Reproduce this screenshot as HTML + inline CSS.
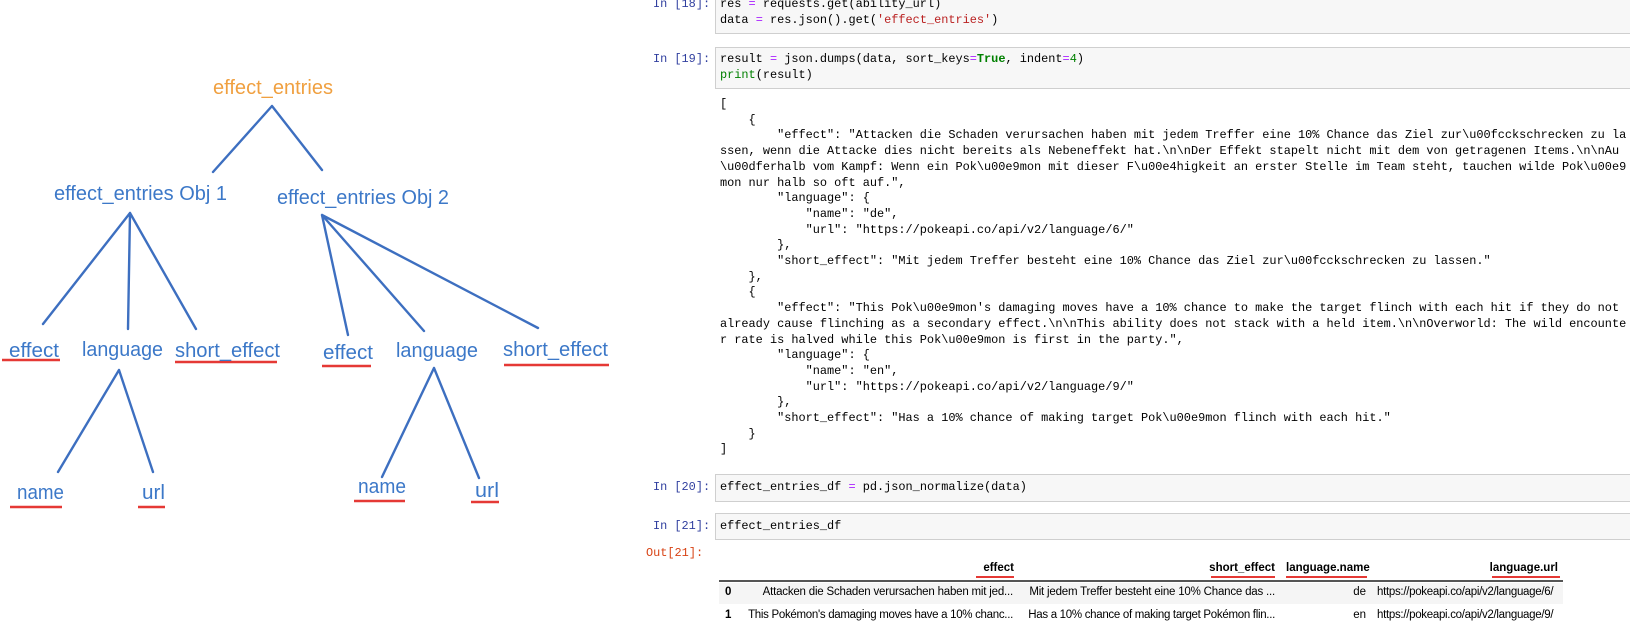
<!DOCTYPE html>
<html><head><meta charset="utf-8"><style>
*{margin:0;padding:0;box-sizing:border-box}
body{width:1630px;height:628px;overflow:hidden;background:#fff;position:relative;font-family:"Liberation Sans",sans-serif}
.p{position:absolute;font-family:"Liberation Mono",monospace;font-size:11.9px;white-space:pre;line-height:15.7px}
.in{color:#303f9f}.out{color:#d84315}
.cell{position:absolute;left:715px;right:0;background:#f7f7f7;border:1px solid #cfcfcf;border-right:none}
.k{color:#008000;font-weight:bold}.o{color:#aa22ff}.s{color:#ba2121}.b{color:#008000}
.t{position:absolute;font-size:11.5px;color:#000;white-space:nowrap}
.r{text-align:right}
.h{font-weight:bold}
.u{position:absolute;height:2px;background:#e53935}
</style></head><body>
<svg width="620" height="628" style="position:absolute;left:0;top:0" font-family="Liberation Sans, DejaVu Sans, sans-serif">
<g stroke="#3d6fc0" stroke-width="2.4" fill="none" stroke-linecap="round">
<path d="M272 106L213 172M272 106L322 170"/>
<path d="M130 213L43 324M130 213L128 329M130 213L196 329"/>
<path d="M322 215L348 335M322 215L424 331M322 215L538 328"/>
<path d="M119 370L58 472M119 370L153 472"/>
<path d="M434 368L382 477M434 368L479 478"/>
</g>
<g stroke="#e53935" stroke-width="2.4">
<path d="M2 360H60M175 362H277M322 366H371M504 365H609M10 507H62M138 507H165M354 501H405M471 502H499"/>
</g>
<g font-size="20" fill="#3c78c8">
<text x="213" y="94" fill="#f0a040" textLength="120" lengthAdjust="spacingAndGlyphs">effect_entries</text>
<text x="54" y="200" textLength="173" lengthAdjust="spacingAndGlyphs">effect_entries Obj 1</text>
<text x="277" y="204" textLength="172" lengthAdjust="spacingAndGlyphs">effect_entries Obj 2</text>
<text x="9" y="357" textLength="50" lengthAdjust="spacingAndGlyphs">effect</text>
<text x="82" y="356" textLength="81" lengthAdjust="spacingAndGlyphs">language</text>
<text x="175" y="357" textLength="105" lengthAdjust="spacingAndGlyphs">short_effect</text>
<text x="323" y="359" textLength="50" lengthAdjust="spacingAndGlyphs">effect</text>
<text x="396" y="357" textLength="82" lengthAdjust="spacingAndGlyphs">language</text>
<text x="503" y="356" textLength="105" lengthAdjust="spacingAndGlyphs">short_effect</text>
<text x="17" y="499" textLength="47" lengthAdjust="spacingAndGlyphs">name</text>
<text x="142" y="499" textLength="23" lengthAdjust="spacingAndGlyphs">url</text>
<text x="358" y="493" textLength="48" lengthAdjust="spacingAndGlyphs">name</text>
<text x="475" y="497" textLength="24" lengthAdjust="spacingAndGlyphs">url</text>
</g>
</svg>

<div class="cell" style="top:-2px;height:36px"></div>
<div class="p in" style="left:653px;top:-3px">In [18]:</div>
<div class="p" style="left:720px;top:-3px">res <span class="o">=</span> requests.get(ability_url)
data <span class="o">=</span> res.json().get(<span class="s">'effect_entries'</span>)</div>

<div class="cell" style="top:47px;height:42px"></div>
<div class="p in" style="left:653px;top:52px">In [19]:</div>
<div class="p" style="left:720px;top:52px">result <span class="o">=</span> json.dumps(data, sort_keys<span class="o">=</span><span class="k">True</span>, indent<span class="o">=</span><span class="b">4</span>)
<span class="b">print</span>(result)</div>

<div class="p" style="left:720px;top:97px;width:910px;overflow:hidden">[
    {
        "effect": "Attacken die Schaden verursachen haben mit jedem Treffer eine 10% Chance das Ziel zur\u00fcckschrecken zu la
ssen, wenn die Attacke dies nicht bereits als Nebeneffekt hat.\n\nDer Effekt stapelt nicht mit dem von getragenen Items.\n\nAu
\u00dferhalb vom Kampf: Wenn ein Pok\u00e9mon mit dieser F\u00e4higkeit an erster Stelle im Team steht, tauchen wilde Pok\u00e9
mon nur halb so oft auf.",
        "language": {
            "name": "de",
            "url": "https://pokeapi.co/api/v2/language/6/"
        },
        "short_effect": "Mit jedem Treffer besteht eine 10% Chance das Ziel zur\u00fcckschrecken zu lassen."
    },
    {
        "effect": "This Pok\u00e9mon's damaging moves have a 10% chance to make the target flinch with each hit if they do not
already cause flinching as a secondary effect.\n\nThis ability does not stack with a held item.\n\nOverworld: The wild encounte
r rate is halved while this Pok\u00e9mon is first in the party.",
        "language": {
            "name": "en",
            "url": "https://pokeapi.co/api/v2/language/9/"
        },
        "short_effect": "Has a 10% chance of making target Pok\u00e9mon flinch with each hit."
    }
]</div>

<div class="cell" style="top:474px;height:28px"></div>
<div class="p in" style="left:653px;top:480px">In [20]:</div>
<div class="p" style="left:720px;top:480px">effect_entries_df <span class="o">=</span> pd.json_normalize(data)</div>

<div class="cell" style="top:513px;height:27px"></div>
<div class="p in" style="left:653px;top:519px">In [21]:</div>
<div class="p" style="left:720px;top:519px">effect_entries_df</div>
<div class="p out" style="left:646px;top:546px">Out[21]:</div>

<div style="position:absolute;left:719px;top:580px;width:844px;height:2px;background:#555"></div>
<div style="position:absolute;left:719px;top:583px;width:844px;height:21px;background:#f5f5f5"></div>
<div class="t h r" style="left:900px;width:114px;top:562px">effect</div>
<div class="t h r" style="left:1150px;width:125px;top:562px">short_effect</div>
<div class="t h" style="left:1286px;top:562px">language.name</div>
<div class="t h r" style="left:1400px;width:158px;top:562px">language.url</div>
<div class="u" style="left:976px;width:38px;top:576px"></div>
<div class="u" style="left:1211px;width:64px;top:576px"></div>
<div class="u" style="left:1286px;width:81px;top:576px"></div>
<div class="u" style="left:1492px;width:68px;top:576px"></div>

<div class="t h" style="left:725px;top:586px">0</div>
<div class="t r" style="left:740px;width:273px;top:586px;letter-spacing:-0.2px">Attacken die Schaden verursachen haben mit jed...</div>
<div class="t r" style="left:1020px;width:255px;top:586px;letter-spacing:-0.2px">Mit jedem Treffer besteht eine 10% Chance das ...</div>
<div class="t r" style="left:1300px;width:66px;top:586px">de</div>
<div class="t" style="left:1377px;top:586px;letter-spacing:-0.3px">https://pokeapi.co/api/v2/language/6/</div>

<div class="t h" style="left:725px;top:609px">1</div>
<div class="t r" style="left:735px;width:278px;top:609px;letter-spacing:-0.3px">This Pokémon's damaging moves have a 10% chanc...</div>
<div class="t r" style="left:1015px;width:260px;top:609px;letter-spacing:-0.3px">Has a 10% chance of making target Pokémon flin...</div>
<div class="t r" style="left:1300px;width:66px;top:609px">en</div>
<div class="t" style="left:1377px;top:609px;letter-spacing:-0.3px">https://pokeapi.co/api/v2/language/9/</div>
</body></html>
